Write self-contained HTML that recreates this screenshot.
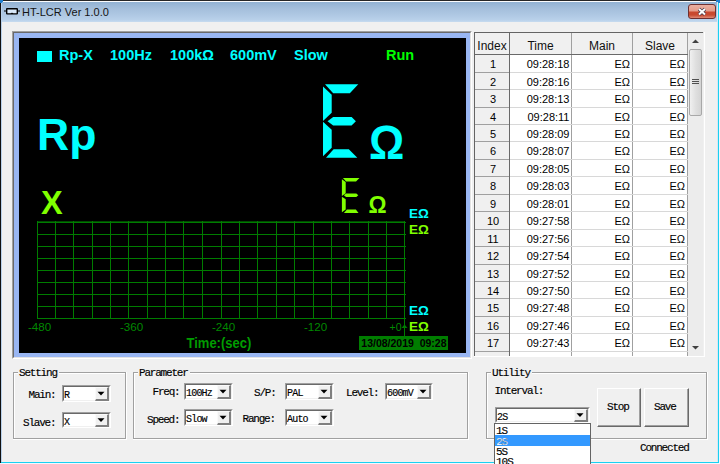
<!DOCTYPE html>
<html><head><meta charset="utf-8">
<style>
*{margin:0;padding:0;box-sizing:border-box}
html,body{width:720px;height:464px;overflow:hidden;background:#f0f0f0;font-family:"Liberation Sans",sans-serif}
.ab{position:absolute}
.t{position:absolute;white-space:nowrap;line-height:1}
.m{position:absolute;white-space:nowrap;line-height:1;font-family:"Liberation Mono",monospace;font-size:11px;letter-spacing:-1.2px;color:#000;-webkit-text-stroke:0.15px #000}
</style></head><body>

<div class="ab" style="left:0;top:0;width:720px;height:22px;background:linear-gradient(#92b2d3 2px,#a3bedb 8px,#afc8e3 15px,#b9d1ea 20px,#c6dbef 22px)"></div>
<div class="ab" style="left:0;top:0;width:720px;height:1px;background:#262626"></div>
<div class="ab" style="left:1px;top:1px;width:717px;height:1px;background:#fbfcfd"></div>
<div class="ab" style="left:0;top:0;width:1px;height:464px;background:#101010"></div>
<div class="ab" style="left:1px;top:1px;width:1px;height:462px;background:#b8d0ea"></div>
<div class="ab" style="left:0;top:0;width:3px;height:2px;background:#1f7fd0"></div>
<div class="ab" style="left:0;top:0;width:2px;height:3px;background:#1f7fd0"></div>
<div class="ab" style="left:716px;top:0;width:4px;height:2px;background:#1f7fd0"></div>
<div class="ab" style="left:718px;top:0;width:2px;height:4px;background:#1f7fd0"></div>
<div class="ab" style="left:717px;top:2px;width:1px;height:460px;background:#d8e8f4"></div>
<div class="ab" style="left:718px;top:3px;width:1px;height:460px;background:#1ad0f0"></div>
<div class="ab" style="left:719px;top:3px;width:1px;height:461px;background:#f0f8ff"></div>
<div class="ab" style="left:1px;top:462px;width:718px;height:1px;background:#1ad0f0"></div>
<div class="ab" style="left:0;top:463px;width:720px;height:1px;background:#f0f8ff"></div>
<svg class="ab" style="left:3px;top:6px" width="18" height="10" viewBox="0 0 18 10">
<rect x="3.7" y="2.7" width="10.6" height="5.2" rx="0.4" fill="#d8e8f8" stroke="#000" stroke-width="1.4"/>
<path d="M1 5H3.5M14.5 5H17" stroke="#000" stroke-width="1"/>
<path d="M7.5 8L9 6.5L10.5 8Z" fill="#000"/>
</svg>
<div class="t" style="left:22px;top:7px;font-size:11px;color:#141414">HT-LCR Ver 1.0.0</div>
<div class="ab" style="left:688px;top:4px;width:28px;height:15px;border-radius:3px;border:1px solid #6e3030;background:linear-gradient(#eab0a2 0px,#e59c8a 6px,#c9482e 7px,#c84a30 10px,#e08a76 13px)"></div>
<svg class="ab" style="left:695px;top:6px" width="14" height="11" viewBox="0 0 14 11"><path d="M4 3L10 8.5M10 3L4 8.5" stroke="#403848" stroke-width="3.4"/><path d="M4 3L10 8.5M10 3L4 8.5" stroke="#fff" stroke-width="2"/></svg>
<div class="ab" style="left:12px;top:31px;width:460px;height:328px;border-top:1px solid #a0a0a0;border-left:1px solid #a0a0a0;border-right:1px solid #fff;border-bottom:1px solid #fff"></div>
<div class="ab" style="left:13px;top:32px;width:458px;height:326px;border-top:1px solid #696969;border-left:1px solid #696969;border-right:1px solid #e3e3e3;border-bottom:1px solid #e3e3e3"></div>
<div class="ab" style="left:14px;top:33px;width:456px;height:324px;background:#99b6f2"></div>
<div class="ab" style="left:19px;top:38px;width:447px;height:315px;background:#000"></div>
<div class="ab" style="left:37px;top:51px;width:15px;height:11px;background:#00ffff"></div>
<div class="t" style="left:59px;top:48px;font-size:14.5px;font-weight:bold;color:#00ffff">Rp-X</div>
<div class="t" style="left:110px;top:48px;font-size:14.5px;font-weight:bold;color:#00ffff">100Hz</div>
<div class="t" style="left:170px;top:48px;font-size:14.5px;font-weight:bold;color:#00ffff">100k&Omega;</div>
<div class="t" style="left:230px;top:48px;font-size:14.5px;font-weight:bold;color:#00ffff">600mV</div>
<div class="t" style="left:294px;top:48px;font-size:14.5px;font-weight:bold;color:#00ffff">Slow</div>
<div class="t" style="left:386px;top:48px;font-size:14.5px;font-weight:bold;color:#00ff00">Run</div>
<div class="t" style="left:37px;top:112.6px;font-size:44.5px;font-weight:bold;color:#00ffff">Rp</div>
<div class="t" style="left:41px;top:187px;font-size:32.5px;font-weight:bold;color:#80ff00">X</div>
<svg class="ab" style="left:0;top:0" width="720" height="464"><polygon points="325.0,84.3 358.3,84.3 349.8,93.3 333.2,93.3" fill="#00ffff"/><polygon points="323.0,86.6 331.7,94.7 331.7,112.7 323.0,121.0" fill="#00ffff"/><polygon points="327.5,121.2 333.2,117.1 351.6,117.1 355.9,121.2 351.6,125.5 333.2,125.5" fill="#00ffff"/><polygon points="323.0,121.7 331.7,129.7 331.7,147.8 323.0,156.3" fill="#00ffff"/><polygon points="326.0,157.7 333.6,149.2 348.8,149.2 357.3,157.7" fill="#00ffff"/></svg>
<svg class="ab" style="left:0;top:0" width="720" height="464"><polygon points="342.9,178.0 359.5,178.0 356.0,181.6 346.1,181.6" fill="#80ff00"/><polygon points="341.9,179.3 345.7,182.0 345.7,193.3 341.9,195.9" fill="#80ff00"/><polygon points="343.9,195.3 346.1,193.6 356.3,193.6 358.3,195.3 356.3,197.0 346.1,197.0" fill="#80ff00"/><polygon points="341.9,196.7 345.7,199.3 345.7,209.6 341.9,212.3" fill="#80ff00"/><polygon points="343.9,212.9 346.9,209.6 355.9,209.6 358.5,212.9" fill="#80ff00"/></svg>
<div class="t" style="left:369px;top:122.8px;font-size:44px;font-weight:bold;color:#00ffff;transform:scaleY(1.09);transform-origin:0 100%">&Omega;</div>
<div class="t" style="left:368.5px;top:194.5px;font-size:22.5px;font-weight:bold;color:#80ff00;transform:scaleY(1.1);transform-origin:0 100%">&Omega;</div>
<div class="t" style="left:409px;top:206px;font-size:13.5px;font-weight:bold;color:#00ffff;margin-top:0.5px">E&Omega;</div>
<div class="t" style="left:409px;top:222px;font-size:13.5px;font-weight:bold;color:#80ff00;margin-top:0.5px">E&Omega;</div>
<div class="t" style="left:409px;top:303px;font-size:13.5px;font-weight:bold;color:#00ffff;margin-top:0.5px">E&Omega;</div>
<div class="t" style="left:409px;top:319px;font-size:13.5px;font-weight:bold;color:#80ff00;margin-top:0.5px">E&Omega;</div>
<svg class="ab" style="left:0;top:0" width="720" height="464"><line x1="37.5" y1="221" x2="37.5" y2="319" stroke="#007c00" stroke-width="1"/><line x1="55.5" y1="221" x2="55.5" y2="319" stroke="#007c00" stroke-width="1"/><line x1="73.5" y1="221" x2="73.5" y2="319" stroke="#007c00" stroke-width="1"/><line x1="92.5" y1="221" x2="92.5" y2="319" stroke="#007c00" stroke-width="1"/><line x1="110.5" y1="221" x2="110.5" y2="319" stroke="#007c00" stroke-width="1"/><line x1="128.5" y1="221" x2="128.5" y2="319" stroke="#007c00" stroke-width="1"/><line x1="147.5" y1="221" x2="147.5" y2="319" stroke="#007c00" stroke-width="1"/><line x1="165.5" y1="221" x2="165.5" y2="319" stroke="#007c00" stroke-width="1"/><line x1="183.5" y1="221" x2="183.5" y2="319" stroke="#007c00" stroke-width="1"/><line x1="202.5" y1="221" x2="202.5" y2="319" stroke="#007c00" stroke-width="1"/><line x1="221.5" y1="221" x2="221.5" y2="319" stroke="#007c00" stroke-width="1"/><line x1="239.5" y1="221" x2="239.5" y2="319" stroke="#007c00" stroke-width="1"/><line x1="257.5" y1="221" x2="257.5" y2="319" stroke="#007c00" stroke-width="1"/><line x1="276.5" y1="221" x2="276.5" y2="319" stroke="#007c00" stroke-width="1"/><line x1="294.5" y1="221" x2="294.5" y2="319" stroke="#007c00" stroke-width="1"/><line x1="313.5" y1="221" x2="313.5" y2="319" stroke="#007c00" stroke-width="1"/><line x1="331.5" y1="221" x2="331.5" y2="319" stroke="#007c00" stroke-width="1"/><line x1="349.5" y1="221" x2="349.5" y2="319" stroke="#007c00" stroke-width="1"/><line x1="368.5" y1="221" x2="368.5" y2="319" stroke="#007c00" stroke-width="1"/><line x1="386.5" y1="221" x2="386.5" y2="319" stroke="#007c00" stroke-width="1"/><line x1="404.5" y1="221" x2="404.5" y2="319" stroke="#007c00" stroke-width="1"/><line x1="37" y1="222.5" x2="406" y2="222.5" stroke="#007c00" stroke-width="1"/><line x1="37" y1="234.5" x2="406" y2="234.5" stroke="#007c00" stroke-width="1"/><line x1="37" y1="246.5" x2="406" y2="246.5" stroke="#007c00" stroke-width="1"/><line x1="37" y1="258.5" x2="406" y2="258.5" stroke="#007c00" stroke-width="1"/><line x1="37" y1="270.5" x2="406" y2="270.5" stroke="#007c00" stroke-width="1"/><line x1="37" y1="282.5" x2="406" y2="282.5" stroke="#007c00" stroke-width="1"/><line x1="37" y1="294.5" x2="406" y2="294.5" stroke="#007c00" stroke-width="1"/><line x1="37" y1="306.5" x2="406" y2="306.5" stroke="#007c00" stroke-width="1"/><line x1="37" y1="318.5" x2="406" y2="318.5" stroke="#007c00" stroke-width="1"/><line x1="404.5" y1="318" x2="404.5" y2="336" stroke="#007c00" stroke-width="1"/><path d="M401.5 328L404.5 324.5L407.5 328Z" fill="#007c00"/><line x1="37" y1="221.5" x2="405" y2="221.5" stroke="#007c00" stroke-width="1" opacity="0.6"/></svg>
<div class="t" style="left:28px;top:320.8px;font-size:11.6px;color:#008800">-480</div>
<div class="t" style="left:120px;top:320.8px;font-size:11.6px;color:#008800">-360</div>
<div class="t" style="left:212px;top:320.8px;font-size:11.6px;color:#008800">-240</div>
<div class="t" style="left:304px;top:320.8px;font-size:11.6px;color:#008800">-120</div>
<div class="t" style="left:389.5px;top:321.5px;font-size:10.5px;color:#008a00">+0</div>
<div class="t" style="left:186.5px;top:336.2px;font-size:13px;font-weight:bold;color:#009c00;transform:scaleY(1.06);transform-origin:0 0">Time:(sec)</div>
<div class="ab" style="left:359px;top:336px;width:89px;height:14px;background:#007d00"></div>
<div class="t" style="left:361.3px;top:337.8px;font-size:10.5px;font-weight:bold;color:#000">13/08/2019&nbsp;&nbsp;09:28</div>
<div class="ab" style="left:474px;top:32px;width:231px;height:325px;background:#fff"></div>
<div class="ab" style="left:474px;top:32px;width:230px;height:324px;background:#e3e3e3"></div>
<div class="ab" style="left:475px;top:33px;width:229px;height:323px;background:#f0f0f0"></div>
<div class="ab" style="left:474px;top:32px;width:229px;height:1px;background:#646464"></div>
<div class="ab" style="left:474px;top:32px;width:1px;height:324px;background:#646464"></div>
<div class="ab" style="left:510px;top:55px;width:178px;height:301px;background:#fff"></div>
<div class="t" style="left:475px;width:34px;top:39.5px;font-size:12px;color:#101010;text-align:center">Index</div>
<div class="ab" style="left:509px;top:33px;width:1px;height:323px;background:#a0a0a0"></div>
<div class="t" style="left:510px;width:61px;top:39.5px;font-size:12px;color:#101010;text-align:center">Time</div>
<div class="ab" style="left:571px;top:33px;width:1px;height:323px;background:#a0a0a0"></div>
<div class="t" style="left:572px;width:60px;top:39.5px;font-size:12px;color:#101010;text-align:center">Main</div>
<div class="ab" style="left:632px;top:33px;width:1px;height:323px;background:#a0a0a0"></div>
<div class="t" style="left:633px;width:54px;top:39.5px;font-size:12px;color:#101010;text-align:center">Slave</div>
<div class="ab" style="left:687px;top:33px;width:1px;height:323px;background:#a0a0a0"></div>
<div class="ab" style="left:475px;top:54px;width:213px;height:1px;background:#696969"></div>
<div class="ab" style="left:509px;top:33px;width:1px;height:323px;background:#696969"></div>
<div class="ab" style="left:475px;top:72px;width:34px;height:1px;background:#a0a0a0"></div>
<div class="ab" style="left:510px;top:72px;width:178px;height:1px;background:#d8d8d8"></div>
<div class="t" style="left:476px;width:34px;top:58.8px;font-size:11px;color:#000;text-align:center">1</div>
<div class="t" style="left:510.5px;width:59px;top:58.8px;font-size:11px;color:#000;text-align:right">09:28:18</div>
<div class="t" style="left:572px;width:58px;top:58.8px;font-size:11px;color:#000;text-align:right">E&Omega;</div>
<div class="t" style="left:633px;width:52px;top:58.8px;font-size:11px;color:#000;text-align:right">E&Omega;</div>
<div class="ab" style="left:475px;top:89px;width:34px;height:1px;background:#a0a0a0"></div>
<div class="ab" style="left:510px;top:89px;width:178px;height:1px;background:#d8d8d8"></div>
<div class="t" style="left:476px;width:34px;top:76.8px;font-size:11px;color:#000;text-align:center">2</div>
<div class="t" style="left:510.5px;width:59px;top:76.8px;font-size:11px;color:#000;text-align:right">09:28:16</div>
<div class="t" style="left:572px;width:58px;top:76.8px;font-size:11px;color:#000;text-align:right">E&Omega;</div>
<div class="t" style="left:633px;width:52px;top:76.8px;font-size:11px;color:#000;text-align:right">E&Omega;</div>
<div class="ab" style="left:475px;top:107px;width:34px;height:1px;background:#a0a0a0"></div>
<div class="ab" style="left:510px;top:107px;width:178px;height:1px;background:#d8d8d8"></div>
<div class="t" style="left:476px;width:34px;top:93.8px;font-size:11px;color:#000;text-align:center">3</div>
<div class="t" style="left:510.5px;width:59px;top:93.8px;font-size:11px;color:#000;text-align:right">09:28:13</div>
<div class="t" style="left:572px;width:58px;top:93.8px;font-size:11px;color:#000;text-align:right">E&Omega;</div>
<div class="t" style="left:633px;width:52px;top:93.8px;font-size:11px;color:#000;text-align:right">E&Omega;</div>
<div class="ab" style="left:475px;top:124px;width:34px;height:1px;background:#a0a0a0"></div>
<div class="ab" style="left:510px;top:124px;width:178px;height:1px;background:#d8d8d8"></div>
<div class="t" style="left:476px;width:34px;top:111.8px;font-size:11px;color:#000;text-align:center">4</div>
<div class="t" style="left:510.5px;width:59px;top:111.8px;font-size:11px;color:#000;text-align:right">09:28:11</div>
<div class="t" style="left:572px;width:58px;top:111.8px;font-size:11px;color:#000;text-align:right">E&Omega;</div>
<div class="t" style="left:633px;width:52px;top:111.8px;font-size:11px;color:#000;text-align:right">E&Omega;</div>
<div class="ab" style="left:475px;top:141px;width:34px;height:1px;background:#a0a0a0"></div>
<div class="ab" style="left:510px;top:141px;width:178px;height:1px;background:#d8d8d8"></div>
<div class="t" style="left:476px;width:34px;top:128.8px;font-size:11px;color:#000;text-align:center">5</div>
<div class="t" style="left:510.5px;width:59px;top:128.8px;font-size:11px;color:#000;text-align:right">09:28:09</div>
<div class="t" style="left:572px;width:58px;top:128.8px;font-size:11px;color:#000;text-align:right">E&Omega;</div>
<div class="t" style="left:633px;width:52px;top:128.8px;font-size:11px;color:#000;text-align:right">E&Omega;</div>
<div class="ab" style="left:475px;top:159px;width:34px;height:1px;background:#a0a0a0"></div>
<div class="ab" style="left:510px;top:159px;width:178px;height:1px;background:#d8d8d8"></div>
<div class="t" style="left:476px;width:34px;top:145.8px;font-size:11px;color:#000;text-align:center">6</div>
<div class="t" style="left:510.5px;width:59px;top:145.8px;font-size:11px;color:#000;text-align:right">09:28:07</div>
<div class="t" style="left:572px;width:58px;top:145.8px;font-size:11px;color:#000;text-align:right">E&Omega;</div>
<div class="t" style="left:633px;width:52px;top:145.8px;font-size:11px;color:#000;text-align:right">E&Omega;</div>
<div class="ab" style="left:475px;top:176px;width:34px;height:1px;background:#a0a0a0"></div>
<div class="ab" style="left:510px;top:176px;width:178px;height:1px;background:#d8d8d8"></div>
<div class="t" style="left:476px;width:34px;top:163.8px;font-size:11px;color:#000;text-align:center">7</div>
<div class="t" style="left:510.5px;width:59px;top:163.8px;font-size:11px;color:#000;text-align:right">09:28:05</div>
<div class="t" style="left:572px;width:58px;top:163.8px;font-size:11px;color:#000;text-align:right">E&Omega;</div>
<div class="t" style="left:633px;width:52px;top:163.8px;font-size:11px;color:#000;text-align:right">E&Omega;</div>
<div class="ab" style="left:475px;top:194px;width:34px;height:1px;background:#a0a0a0"></div>
<div class="ab" style="left:510px;top:194px;width:178px;height:1px;background:#d8d8d8"></div>
<div class="t" style="left:476px;width:34px;top:180.8px;font-size:11px;color:#000;text-align:center">8</div>
<div class="t" style="left:510.5px;width:59px;top:180.8px;font-size:11px;color:#000;text-align:right">09:28:03</div>
<div class="t" style="left:572px;width:58px;top:180.8px;font-size:11px;color:#000;text-align:right">E&Omega;</div>
<div class="t" style="left:633px;width:52px;top:180.8px;font-size:11px;color:#000;text-align:right">E&Omega;</div>
<div class="ab" style="left:475px;top:211px;width:34px;height:1px;background:#a0a0a0"></div>
<div class="ab" style="left:510px;top:211px;width:178px;height:1px;background:#d8d8d8"></div>
<div class="t" style="left:476px;width:34px;top:198.8px;font-size:11px;color:#000;text-align:center">9</div>
<div class="t" style="left:510.5px;width:59px;top:198.8px;font-size:11px;color:#000;text-align:right">09:28:01</div>
<div class="t" style="left:572px;width:58px;top:198.8px;font-size:11px;color:#000;text-align:right">E&Omega;</div>
<div class="t" style="left:633px;width:52px;top:198.8px;font-size:11px;color:#000;text-align:right">E&Omega;</div>
<div class="ab" style="left:475px;top:229px;width:34px;height:1px;background:#a0a0a0"></div>
<div class="ab" style="left:510px;top:229px;width:178px;height:1px;background:#d8d8d8"></div>
<div class="t" style="left:476px;width:34px;top:215.8px;font-size:11px;color:#000;text-align:center">10</div>
<div class="t" style="left:510.5px;width:59px;top:215.8px;font-size:11px;color:#000;text-align:right">09:27:58</div>
<div class="t" style="left:572px;width:58px;top:215.8px;font-size:11px;color:#000;text-align:right">E&Omega;</div>
<div class="t" style="left:633px;width:52px;top:215.8px;font-size:11px;color:#000;text-align:right">E&Omega;</div>
<div class="ab" style="left:475px;top:246px;width:34px;height:1px;background:#a0a0a0"></div>
<div class="ab" style="left:510px;top:246px;width:178px;height:1px;background:#d8d8d8"></div>
<div class="t" style="left:476px;width:34px;top:233.8px;font-size:11px;color:#000;text-align:center">11</div>
<div class="t" style="left:510.5px;width:59px;top:233.8px;font-size:11px;color:#000;text-align:right">09:27:56</div>
<div class="t" style="left:572px;width:58px;top:233.8px;font-size:11px;color:#000;text-align:right">E&Omega;</div>
<div class="t" style="left:633px;width:52px;top:233.8px;font-size:11px;color:#000;text-align:right">E&Omega;</div>
<div class="ab" style="left:475px;top:264px;width:34px;height:1px;background:#a0a0a0"></div>
<div class="ab" style="left:510px;top:264px;width:178px;height:1px;background:#d8d8d8"></div>
<div class="t" style="left:476px;width:34px;top:250.8px;font-size:11px;color:#000;text-align:center">12</div>
<div class="t" style="left:510.5px;width:59px;top:250.8px;font-size:11px;color:#000;text-align:right">09:27:54</div>
<div class="t" style="left:572px;width:58px;top:250.8px;font-size:11px;color:#000;text-align:right">E&Omega;</div>
<div class="t" style="left:633px;width:52px;top:250.8px;font-size:11px;color:#000;text-align:right">E&Omega;</div>
<div class="ab" style="left:475px;top:281px;width:34px;height:1px;background:#a0a0a0"></div>
<div class="ab" style="left:510px;top:281px;width:178px;height:1px;background:#d8d8d8"></div>
<div class="t" style="left:476px;width:34px;top:268.8px;font-size:11px;color:#000;text-align:center">13</div>
<div class="t" style="left:510.5px;width:59px;top:268.8px;font-size:11px;color:#000;text-align:right">09:27:52</div>
<div class="t" style="left:572px;width:58px;top:268.8px;font-size:11px;color:#000;text-align:right">E&Omega;</div>
<div class="t" style="left:633px;width:52px;top:268.8px;font-size:11px;color:#000;text-align:right">E&Omega;</div>
<div class="ab" style="left:475px;top:298px;width:34px;height:1px;background:#a0a0a0"></div>
<div class="ab" style="left:510px;top:298px;width:178px;height:1px;background:#d8d8d8"></div>
<div class="t" style="left:476px;width:34px;top:285.8px;font-size:11px;color:#000;text-align:center">14</div>
<div class="t" style="left:510.5px;width:59px;top:285.8px;font-size:11px;color:#000;text-align:right">09:27:50</div>
<div class="t" style="left:572px;width:58px;top:285.8px;font-size:11px;color:#000;text-align:right">E&Omega;</div>
<div class="t" style="left:633px;width:52px;top:285.8px;font-size:11px;color:#000;text-align:right">E&Omega;</div>
<div class="ab" style="left:475px;top:316px;width:34px;height:1px;background:#a0a0a0"></div>
<div class="ab" style="left:510px;top:316px;width:178px;height:1px;background:#d8d8d8"></div>
<div class="t" style="left:476px;width:34px;top:302.8px;font-size:11px;color:#000;text-align:center">15</div>
<div class="t" style="left:510.5px;width:59px;top:302.8px;font-size:11px;color:#000;text-align:right">09:27:48</div>
<div class="t" style="left:572px;width:58px;top:302.8px;font-size:11px;color:#000;text-align:right">E&Omega;</div>
<div class="t" style="left:633px;width:52px;top:302.8px;font-size:11px;color:#000;text-align:right">E&Omega;</div>
<div class="ab" style="left:475px;top:333px;width:34px;height:1px;background:#a0a0a0"></div>
<div class="ab" style="left:510px;top:333px;width:178px;height:1px;background:#d8d8d8"></div>
<div class="t" style="left:476px;width:34px;top:320.8px;font-size:11px;color:#000;text-align:center">16</div>
<div class="t" style="left:510.5px;width:59px;top:320.8px;font-size:11px;color:#000;text-align:right">09:27:46</div>
<div class="t" style="left:572px;width:58px;top:320.8px;font-size:11px;color:#000;text-align:right">E&Omega;</div>
<div class="t" style="left:633px;width:52px;top:320.8px;font-size:11px;color:#000;text-align:right">E&Omega;</div>
<div class="ab" style="left:475px;top:351px;width:34px;height:1px;background:#a0a0a0"></div>
<div class="ab" style="left:510px;top:351px;width:178px;height:1px;background:#d8d8d8"></div>
<div class="t" style="left:476px;width:34px;top:337.8px;font-size:11px;color:#000;text-align:center">17</div>
<div class="t" style="left:510.5px;width:59px;top:337.8px;font-size:11px;color:#000;text-align:right">09:27:43</div>
<div class="t" style="left:572px;width:58px;top:337.8px;font-size:11px;color:#000;text-align:right">E&Omega;</div>
<div class="t" style="left:633px;width:52px;top:337.8px;font-size:11px;color:#000;text-align:right">E&Omega;</div>
<div class="ab" style="left:688px;top:33px;width:15px;height:323px;background:#ececec"></div>
<svg class="ab" style="left:688px;top:33px" width="15" height="16"><path d="M4 10L7.5 6.5L11 10Z" fill="#404040"/></svg>
<div class="ab" style="left:689px;top:49px;width:13px;height:67px;border:1px solid #a8a8a8;border-radius:2px;background:linear-gradient(90deg,#f0f0f0,#e0e0e0 50%,#d4d4d4)"></div>
<svg class="ab" style="left:689px;top:77.5px" width="13" height="8"><path d="M3 1.5H10M3 3.5H10M3 5.5H10" stroke="#505050" stroke-width="1"/></svg>
<svg class="ab" style="left:688px;top:340px" width="15" height="16"><path d="M4 6L7.5 9.5L11 6Z" fill="#404040"/></svg>
<div class="ab" style="left:13px;top:372px;width:113px;height:67px;border:1px solid #a0a0a0"></div>
<div class="ab" style="left:14px;top:373px;width:111px;height:65px;border-top:1px solid #fff;border-left:1px solid #fff"></div>
<div class="ab" style="left:13px;top:439px;width:114px;height:1px;background:#fff"></div>
<div class="ab" style="left:126px;top:372px;width:1px;height:68px;background:#fff"></div>
<div class="ab" style="left:18px;top:368px;width:40.800000000000004px;height:10px;background:#f0f0f0"></div>
<div class="m" style="left:19px;top:368.0px">Setting</div>
<div class="ab" style="left:133px;top:372px;width:335px;height:67px;border:1px solid #a0a0a0"></div>
<div class="ab" style="left:134px;top:373px;width:333px;height:65px;border-top:1px solid #fff;border-left:1px solid #fff"></div>
<div class="ab" style="left:133px;top:439px;width:336px;height:1px;background:#fff"></div>
<div class="ab" style="left:468px;top:372px;width:1px;height:68px;background:#fff"></div>
<div class="ab" style="left:138px;top:368px;width:51.6px;height:10px;background:#f0f0f0"></div>
<div class="m" style="left:139px;top:368.0px">Parameter</div>
<div class="ab" style="left:486px;top:372px;width:221px;height:67px;border:1px solid #a0a0a0"></div>
<div class="ab" style="left:487px;top:373px;width:219px;height:65px;border-top:1px solid #fff;border-left:1px solid #fff"></div>
<div class="ab" style="left:486px;top:439px;width:222px;height:1px;background:#fff"></div>
<div class="ab" style="left:707px;top:372px;width:1px;height:68px;background:#fff"></div>
<div class="ab" style="left:491px;top:368px;width:40.800000000000004px;height:10px;background:#f0f0f0"></div>
<div class="m" style="left:492px;top:368.0px">Utility</div>
<div class="m" style="left:28.5px;top:390.2px">Main:</div>
<div class="ab" style="left:62px;top:385px;width:49px;height:17px;background:#fff;border-top:1px solid #a0a0a0;border-left:1px solid #a0a0a0;border-right:1px solid #fff;border-bottom:1px solid #fff"></div>
<div class="ab" style="left:63px;top:386px;width:47px;height:15px;border-top:1px solid #696969;border-left:1px solid #696969;border-right:1px solid #f0f0f0;border-bottom:1px solid #f0f0f0"></div>
<div class="ab" style="left:95px;top:387px;width:14px;height:14px;background:#f0f0f0;border-top:1px solid #fafafa;border-left:1px solid #fafafa;border-right:2px solid #808080;border-bottom:2px solid #808080"></div>
<svg class="ab" style="left:95px;top:387px" width="14" height="14"><path d="M2.5 4.7H9.5L6 8.5Z" fill="#000"/></svg>
<div class="m" style="left:64px;top:390.5px;font-size:10px;letter-spacing:-0.8px">R</div>
<div class="m" style="left:23px;top:417.5px">Slave:</div>
<div class="ab" style="left:62px;top:412px;width:49px;height:16px;background:#fff;border-top:1px solid #a0a0a0;border-left:1px solid #a0a0a0;border-right:1px solid #fff;border-bottom:1px solid #fff"></div>
<div class="ab" style="left:63px;top:413px;width:47px;height:14px;border-top:1px solid #696969;border-left:1px solid #696969;border-right:1px solid #f0f0f0;border-bottom:1px solid #f0f0f0"></div>
<div class="ab" style="left:95px;top:414px;width:14px;height:13px;background:#f0f0f0;border-top:1px solid #fafafa;border-left:1px solid #fafafa;border-right:2px solid #808080;border-bottom:2px solid #808080"></div>
<svg class="ab" style="left:95px;top:414px" width="14" height="13"><path d="M2.5 4.2H9.5L6 8.0Z" fill="#000"/></svg>
<div class="m" style="left:64px;top:417.5px;font-size:10px;letter-spacing:-0.8px">X</div>
<div class="m" style="left:152.5px;top:386.5px">Freq:</div>
<div class="ab" style="left:184px;top:383px;width:49px;height:17px;background:#fff;border-top:1px solid #a0a0a0;border-left:1px solid #a0a0a0;border-right:1px solid #fff;border-bottom:1px solid #fff"></div>
<div class="ab" style="left:185px;top:384px;width:47px;height:15px;border-top:1px solid #696969;border-left:1px solid #696969;border-right:1px solid #f0f0f0;border-bottom:1px solid #f0f0f0"></div>
<div class="ab" style="left:217px;top:385px;width:14px;height:14px;background:#f0f0f0;border-top:1px solid #fafafa;border-left:1px solid #fafafa;border-right:2px solid #808080;border-bottom:2px solid #808080"></div>
<svg class="ab" style="left:217px;top:385px" width="14" height="14"><path d="M2.5 4.7H9.5L6 8.5Z" fill="#000"/></svg>
<div class="m" style="left:186px;top:388.5px;font-size:10px;letter-spacing:-0.8px">100Hz</div>
<div class="m" style="left:147px;top:414.5px">Speed:</div>
<div class="ab" style="left:184px;top:409px;width:49px;height:17px;background:#fff;border-top:1px solid #a0a0a0;border-left:1px solid #a0a0a0;border-right:1px solid #fff;border-bottom:1px solid #fff"></div>
<div class="ab" style="left:185px;top:410px;width:47px;height:15px;border-top:1px solid #696969;border-left:1px solid #696969;border-right:1px solid #f0f0f0;border-bottom:1px solid #f0f0f0"></div>
<div class="ab" style="left:217px;top:411px;width:14px;height:14px;background:#f0f0f0;border-top:1px solid #fafafa;border-left:1px solid #fafafa;border-right:2px solid #808080;border-bottom:2px solid #808080"></div>
<svg class="ab" style="left:217px;top:411px" width="14" height="14"><path d="M2.5 4.7H9.5L6 8.5Z" fill="#000"/></svg>
<div class="m" style="left:186px;top:414.5px;font-size:10px;letter-spacing:-0.8px">Slow</div>
<div class="m" style="left:254px;top:387.5px">S/P:</div>
<div class="ab" style="left:285px;top:383px;width:49px;height:17px;background:#fff;border-top:1px solid #a0a0a0;border-left:1px solid #a0a0a0;border-right:1px solid #fff;border-bottom:1px solid #fff"></div>
<div class="ab" style="left:286px;top:384px;width:47px;height:15px;border-top:1px solid #696969;border-left:1px solid #696969;border-right:1px solid #f0f0f0;border-bottom:1px solid #f0f0f0"></div>
<div class="ab" style="left:318px;top:385px;width:14px;height:14px;background:#f0f0f0;border-top:1px solid #fafafa;border-left:1px solid #fafafa;border-right:2px solid #808080;border-bottom:2px solid #808080"></div>
<svg class="ab" style="left:318px;top:385px" width="14" height="14"><path d="M2.5 4.7H9.5L6 8.5Z" fill="#000"/></svg>
<div class="m" style="left:287px;top:388.5px;font-size:10px;letter-spacing:-0.8px">PAL</div>
<div class="m" style="left:242.5px;top:413.5px">Range:</div>
<div class="ab" style="left:285px;top:409px;width:49px;height:17px;background:#fff;border-top:1px solid #a0a0a0;border-left:1px solid #a0a0a0;border-right:1px solid #fff;border-bottom:1px solid #fff"></div>
<div class="ab" style="left:286px;top:410px;width:47px;height:15px;border-top:1px solid #696969;border-left:1px solid #696969;border-right:1px solid #f0f0f0;border-bottom:1px solid #f0f0f0"></div>
<div class="ab" style="left:318px;top:411px;width:14px;height:14px;background:#f0f0f0;border-top:1px solid #fafafa;border-left:1px solid #fafafa;border-right:2px solid #808080;border-bottom:2px solid #808080"></div>
<svg class="ab" style="left:318px;top:411px" width="14" height="14"><path d="M2.5 4.7H9.5L6 8.5Z" fill="#000"/></svg>
<div class="m" style="left:287px;top:414.5px;font-size:10px;letter-spacing:-0.8px">Auto</div>
<div class="m" style="left:346px;top:387.5px">Level:</div>
<div class="ab" style="left:385px;top:383px;width:48px;height:17px;background:#fff;border-top:1px solid #a0a0a0;border-left:1px solid #a0a0a0;border-right:1px solid #fff;border-bottom:1px solid #fff"></div>
<div class="ab" style="left:386px;top:384px;width:46px;height:15px;border-top:1px solid #696969;border-left:1px solid #696969;border-right:1px solid #f0f0f0;border-bottom:1px solid #f0f0f0"></div>
<div class="ab" style="left:417px;top:385px;width:14px;height:14px;background:#f0f0f0;border-top:1px solid #fafafa;border-left:1px solid #fafafa;border-right:2px solid #808080;border-bottom:2px solid #808080"></div>
<svg class="ab" style="left:417px;top:385px" width="14" height="14"><path d="M2.5 4.7H9.5L6 8.5Z" fill="#000"/></svg>
<div class="m" style="left:387px;top:388.5px;font-size:10px;letter-spacing:-0.8px">600mV</div>
<div class="m" style="left:494.5px;top:385.5px">Interval:</div>
<div class="ab" style="left:495px;top:407px;width:95px;height:16px;background:#fff;border-top:1px solid #a0a0a0;border-left:1px solid #a0a0a0;border-right:1px solid #fff;border-bottom:1px solid #fff"></div>
<div class="ab" style="left:496px;top:408px;width:93px;height:14px;border-top:1px solid #696969;border-left:1px solid #696969;border-right:1px solid #f0f0f0;border-bottom:1px solid #f0f0f0"></div>
<div class="ab" style="left:574px;top:409px;width:14px;height:13px;background:#f0f0f0;border-top:1px solid #fafafa;border-left:1px solid #fafafa;border-right:2px solid #808080;border-bottom:2px solid #808080"></div>
<svg class="ab" style="left:574px;top:409px" width="14" height="13"><path d="M2.5 4.2H9.5L6 8.0Z" fill="#000"/></svg>
<div class="m" style="left:497px;top:412.5px;font-size:10px;letter-spacing:-0.8px">2S</div>
<div class="ab" style="left:597px;top:388px;width:44px;height:39px;background:#f0f0f0;border-top:1px solid #fff;border-left:1px solid #fff;border-right:1px solid #696969;border-bottom:1px solid #696969"></div>
<div class="ab" style="left:598px;top:389px;width:42px;height:37px;border-right:1px solid #a0a0a0;border-bottom:1px solid #a0a0a0"></div>
<div class="m" style="left:607px;top:401.5px">Stop</div>
<div class="ab" style="left:644px;top:388px;width:45px;height:39px;background:#f0f0f0;border-top:1px solid #fff;border-left:1px solid #fff;border-right:1px solid #696969;border-bottom:1px solid #696969"></div>
<div class="ab" style="left:645px;top:389px;width:43px;height:37px;border-right:1px solid #a0a0a0;border-bottom:1px solid #a0a0a0"></div>
<div class="m" style="left:654px;top:401.5px">Save</div>
<div class="m" style="left:640px;top:443.0px">Connected</div>
<div class="ab" style="left:494px;top:423px;width:97px;height:41px;background:#fff;border:1px solid #646464;border-bottom:none"></div>
<div class="ab" style="left:495px;top:435px;width:95px;height:11px;background:#3399ff"></div>
<div class="m" style="left:496px;top:426px;font-size:11px;letter-spacing:-1px;color:#000">1S</div>
<div class="m" style="left:496px;top:437px;font-size:11px;letter-spacing:-1px;color:#fff">2S</div>
<div class="m" style="left:496px;top:447px;font-size:11px;letter-spacing:-1px;color:#000">5S</div>
<div class="m" style="left:496px;top:457px;font-size:11px;letter-spacing:-1px;color:#000">10S</div>
</body></html>
